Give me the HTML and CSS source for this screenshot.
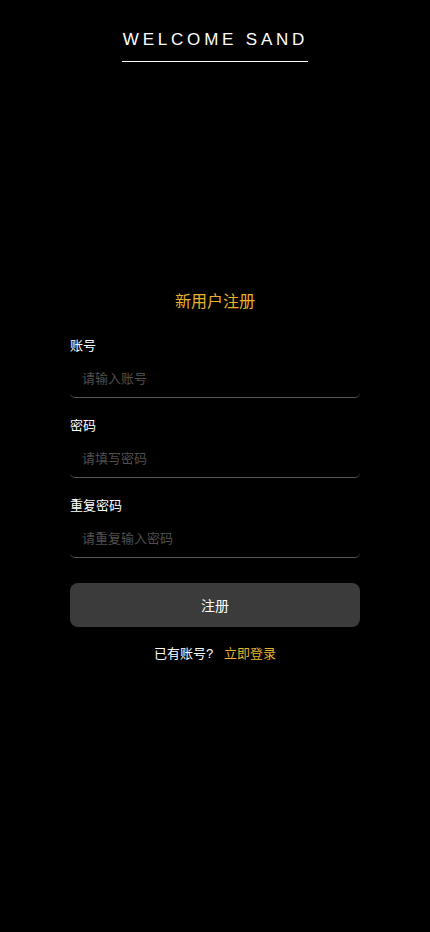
FILE: index.html
```html
<!DOCTYPE html>
<html lang="zh-CN">
<head>
<meta charset="utf-8">
<meta name="viewport" content="width=device-width, initial-scale=1">
<title>注册</title>
<link rel="stylesheet" href="styles.css">
</head>
<body>
<div class="page">
  <header class="header">
    <h1 class="brand">WELCOME SAND</h1>
  </header>
  <main class="form-wrap">
    <h2 class="form-title">新用户注册</h2>
    <form class="form">
      <div class="field">
        <label class="label">账号</label>
        <input class="input" type="text" placeholder="请输入账号">
      </div>
      <div class="field">
        <label class="label">密码</label>
        <input class="input" type="password" placeholder="请填写密码">
      </div>
      <div class="field">
        <label class="label">重复密码</label>
        <input class="input" type="password" placeholder="请重复输入密码">
      </div>
      <button class="submit" type="button">注册</button>
    </form>
    <p class="footer-text">已有账号? <a class="link" href="#">立即登录</a></p>
  </main>
</div>
</body>
</html>
```
FILE: styles.css
```css
* { box-sizing: border-box; }
html, body {
  margin: 0;
  padding: 0;
  background: #000;
  color: #fff;
  font-family: "Liberation Sans", "Noto Sans CJK SC", sans-serif;
}
.page {
  width: 430px;
  min-height: 932px;
  display: flex;
  flex-direction: column;
  align-items: center;
}
.header {
  padding-top: 29px;
  display: flex;
  justify-content: center;
}
.brand {
  margin: 0;
  font-size: 17px;
  font-weight: 400;
  letter-spacing: 3.8px;
  line-height: 22px;
  padding-bottom: 10px;
  border-bottom: 1px solid #fff;
  padding-left: 1px;
}
.form-wrap {
  width: 290px;
  margin-top: 229px;
  display: flex;
  flex-direction: column;
}
.form-title {
  margin: 0 0 23px;
  text-align: center;
  font-size: 16px;
  font-weight: 400;
  line-height: 22px;
  color: #e8b22c;
}
.form {
  display: flex;
  flex-direction: column;
}
.field {
  display: flex;
  flex-direction: column;
  gap: 2px;
  margin-bottom: 18px;
}
.label {
  font-size: 13px;
  line-height: 20px;
  color: #fff;
}
.input {
  height: 40px;
  background: transparent;
  border: none;
  border-bottom: 1px solid #555;
  border-radius: 5px;
  padding: 1px 12px 0;
  font-size: 13px;
  color: #fff;
  font-family: inherit;
  outline: none;
}
.input::placeholder { color: #4f4f4f; }
.submit {
  margin-top: 7px;
  height: 44px;
  border: none;
  border-radius: 8px;
  background: #3b3b3b;
  color: #fff;
  font-size: 14px;
  font-family: inherit;
}
.footer-text {
  margin: 17px 0 0;
  text-align: center;
  font-size: 13px;
  line-height: 20px;
  color: #fff;
}
.link {
  color: #e8b22c;
  text-decoration: none;
  margin-left: 7px;
}
```
